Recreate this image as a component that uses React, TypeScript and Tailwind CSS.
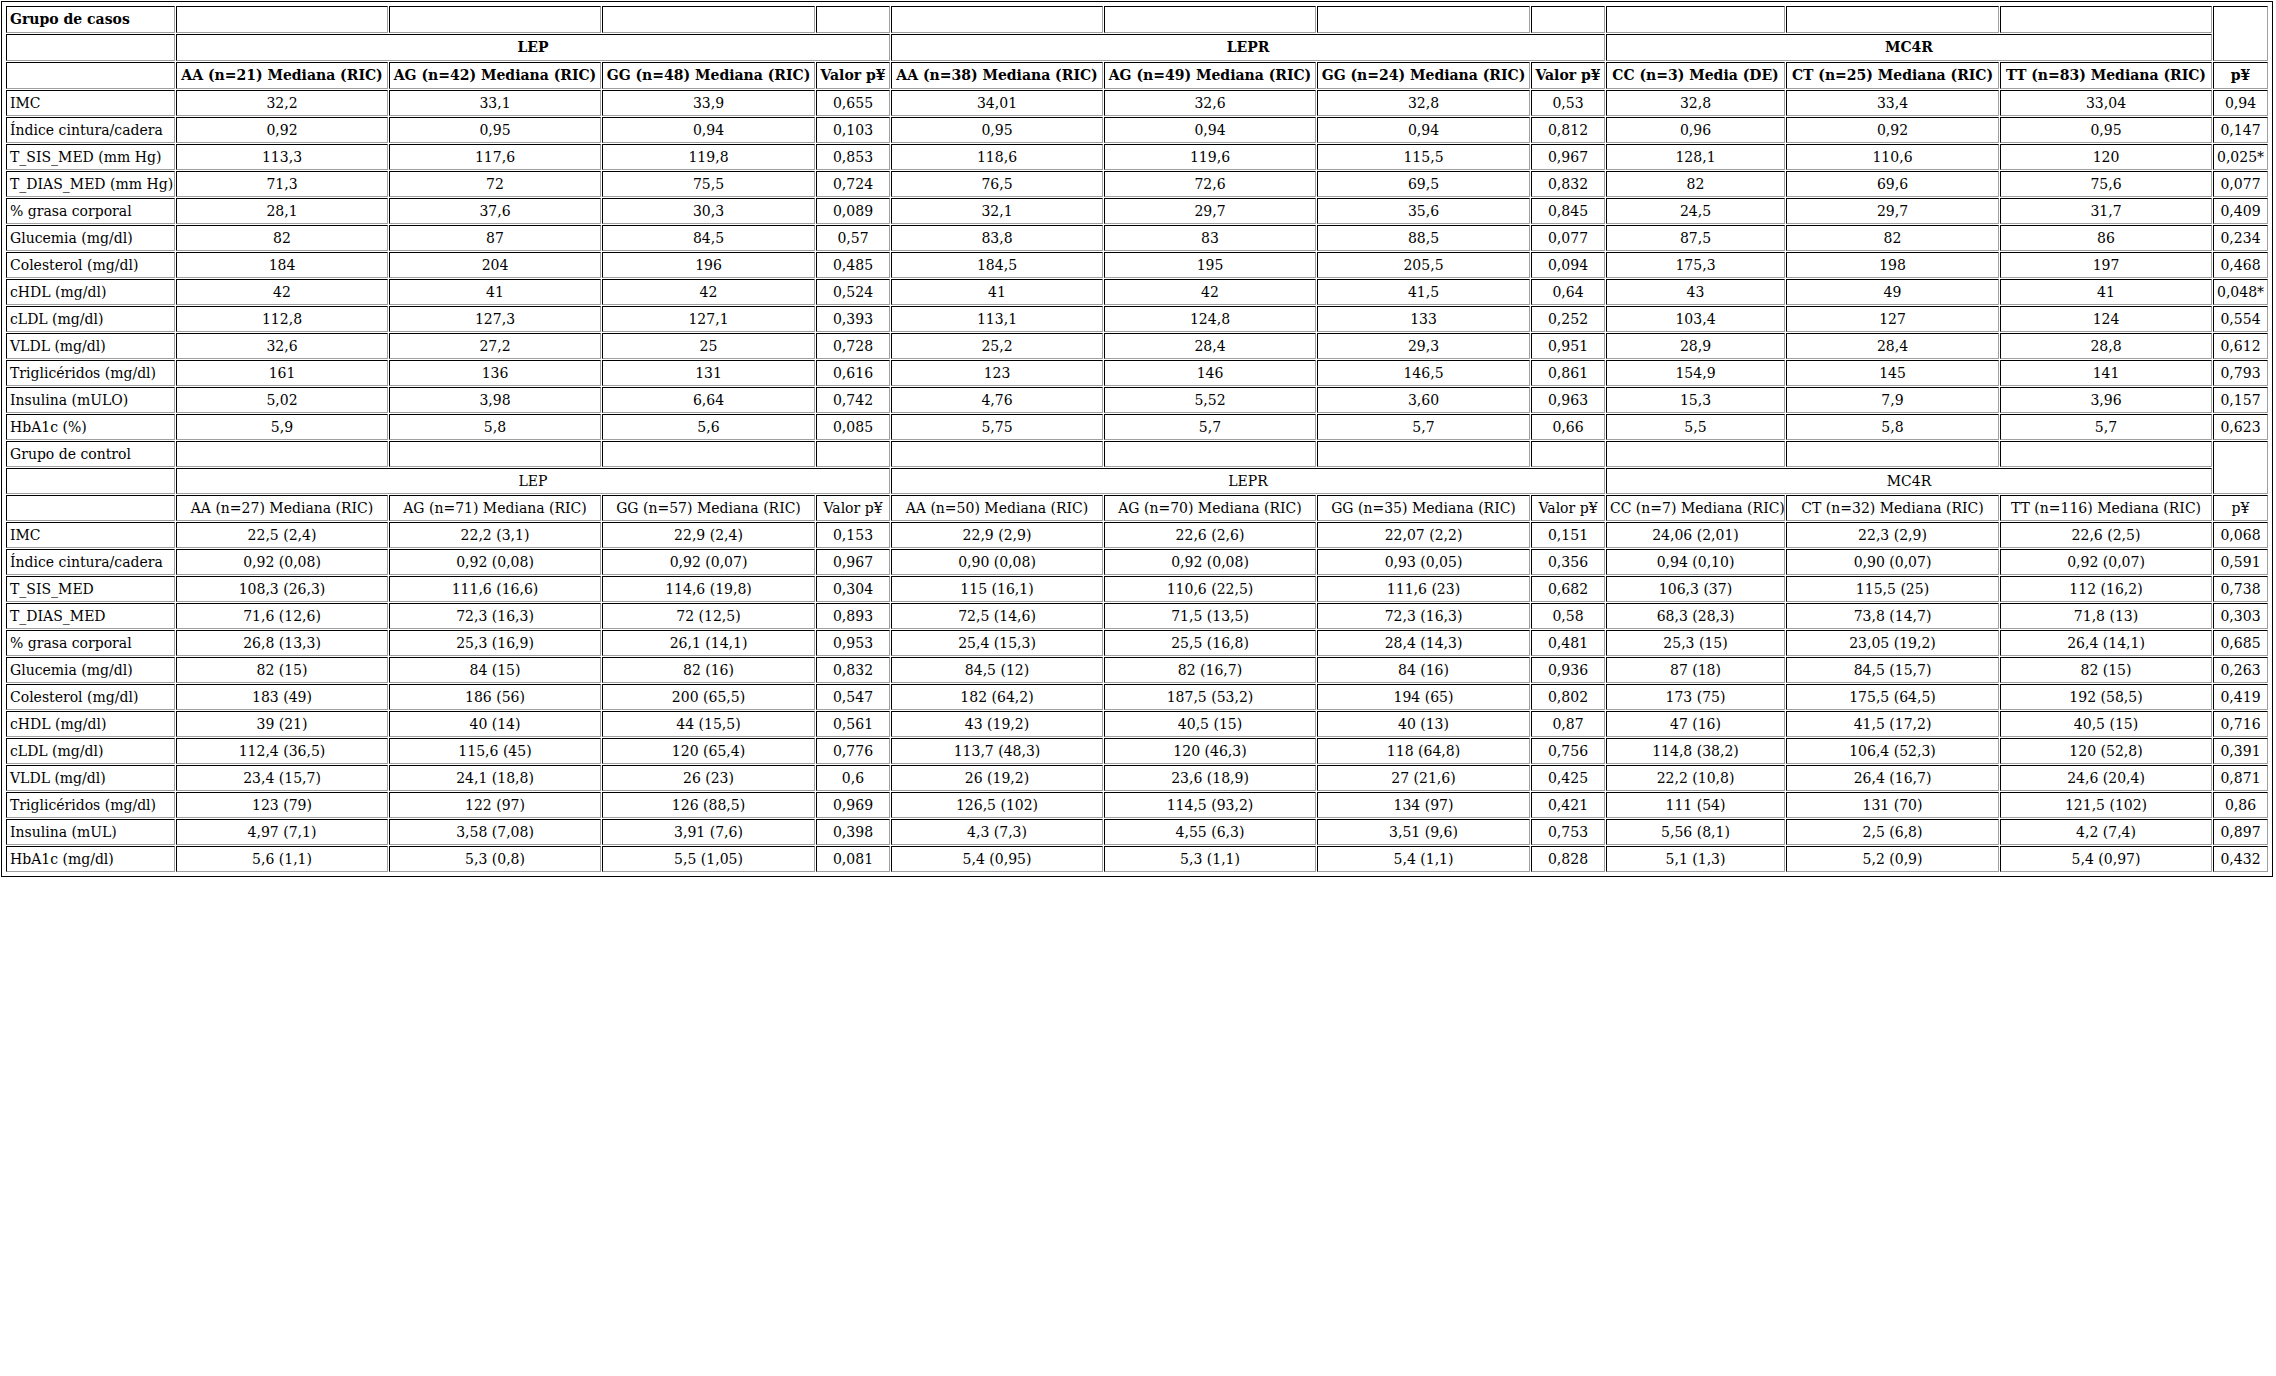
type Row = { label: string; values: string[] };

const casosRows: Row[] = [
  { label: "IMC", values: ["32,2", "33,1", "33,9", "0,655", "34,01", "32,6", "32,8", "0,53", "32,8", "33,4", "33,04", "0,94"] },
  { label: "Índice cintura/cadera", values: ["0,92", "0,95", "0,94", "0,103", "0,95", "0,94", "0,94", "0,812", "0,96", "0,92", "0,95", "0,147"] },
  { label: "T_SIS_MED (mm Hg)", values: ["113,3", "117,6", "119,8", "0,853", "118,6", "119,6", "115,5", "0,967", "128,1", "110,6", "120", "0,025*"] },
  { label: "T_DIAS_MED (mm Hg)", values: ["71,3", "72", "75,5", "0,724", "76,5", "72,6", "69,5", "0,832", "82", "69,6", "75,6", "0,077"] },
  { label: "% grasa corporal", values: ["28,1", "37,6", "30,3", "0,089", "32,1", "29,7", "35,6", "0,845", "24,5", "29,7", "31,7", "0,409"] },
  { label: "Glucemia (mg/dl)", values: ["82", "87", "84,5", "0,57", "83,8", "83", "88,5", "0,077", "87,5", "82", "86", "0,234"] },
  { label: "Colesterol (mg/dl)", values: ["184", "204", "196", "0,485", "184,5", "195", "205,5", "0,094", "175,3", "198", "197", "0,468"] },
  { label: "cHDL (mg/dl)", values: ["42", "41", "42", "0,524", "41", "42", "41,5", "0,64", "43", "49", "41", "0,048*"] },
  { label: "cLDL (mg/dl)", values: ["112,8", "127,3", "127,1", "0,393", "113,1", "124,8", "133", "0,252", "103,4", "127", "124", "0,554"] },
  { label: "VLDL (mg/dl)", values: ["32,6", "27,2", "25", "0,728", "25,2", "28,4", "29,3", "0,951", "28,9", "28,4", "28,8", "0,612"] },
  { label: "Triglicéridos (mg/dl)", values: ["161", "136", "131", "0,616", "123", "146", "146,5", "0,861", "154,9", "145", "141", "0,793"] },
  { label: "Insulina (mULO)", values: ["5,02", "3,98", "6,64", "0,742", "4,76", "5,52", "3,60", "0,963", "15,3", "7,9", "3,96", "0,157"] },
  { label: "HbA1c (%)", values: ["5,9", "5,8", "5,6", "0,085", "5,75", "5,7", "5,7", "0,66", "5,5", "5,8", "5,7", "0,623"] },
];

const controlRows: Row[] = [
  { label: "IMC", values: ["22,5 (2,4)", "22,2 (3,1)", "22,9 (2,4)", "0,153", "22,9 (2,9)", "22,6 (2,6)", "22,07 (2,2)", "0,151", "24,06 (2,01)", "22,3 (2,9)", "22,6 (2,5)", "0,068"] },
  { label: "Índice cintura/cadera", values: ["0,92 (0,08)", "0,92 (0,08)", "0,92 (0,07)", "0,967", "0,90 (0,08)", "0,92 (0,08)", "0,93 (0,05)", "0,356", "0,94 (0,10)", "0,90 (0,07)", "0,92 (0,07)", "0,591"] },
  { label: "T_SIS_MED", values: ["108,3 (26,3)", "111,6 (16,6)", "114,6 (19,8)", "0,304", "115 (16,1)", "110,6 (22,5)", "111,6 (23)", "0,682", "106,3 (37)", "115,5 (25)", "112 (16,2)", "0,738"] },
  { label: "T_DIAS_MED", values: ["71,6 (12,6)", "72,3 (16,3)", "72 (12,5)", "0,893", "72,5 (14,6)", "71,5 (13,5)", "72,3 (16,3)", "0,58", "68,3 (28,3)", "73,8 (14,7)", "71,8 (13)", "0,303"] },
  { label: "% grasa corporal", values: ["26,8 (13,3)", "25,3 (16,9)", "26,1 (14,1)", "0,953", "25,4 (15,3)", "25,5 (16,8)", "28,4 (14,3)", "0,481", "25,3 (15)", "23,05 (19,2)", "26,4 (14,1)", "0,685"] },
  { label: "Glucemia (mg/dl)", values: ["82 (15)", "84 (15)", "82 (16)", "0,832", "84,5 (12)", "82 (16,7)", "84 (16)", "0,936", "87 (18)", "84,5 (15,7)", "82 (15)", "0,263"] },
  { label: "Colesterol (mg/dl)", values: ["183 (49)", "186 (56)", "200 (65,5)", "0,547", "182 (64,2)", "187,5 (53,2)", "194 (65)", "0,802", "173 (75)", "175,5 (64,5)", "192 (58,5)", "0,419"] },
  { label: "cHDL (mg/dl)", values: ["39 (21)", "40 (14)", "44 (15,5)", "0,561", "43 (19,2)", "40,5 (15)", "40 (13)", "0,87", "47 (16)", "41,5 (17,2)", "40,5 (15)", "0,716"] },
  { label: "cLDL (mg/dl)", values: ["112,4 (36,5)", "115,6 (45)", "120 (65,4)", "0,776", "113,7 (48,3)", "120 (46,3)", "118 (64,8)", "0,756", "114,8 (38,2)", "106,4 (52,3)", "120 (52,8)", "0,391"] },
  { label: "VLDL (mg/dl)", values: ["23,4 (15,7)", "24,1 (18,8)", "26 (23)", "0,6", "26 (19,2)", "23,6 (18,9)", "27 (21,6)", "0,425", "22,2 (10,8)", "26,4 (16,7)", "24,6 (20,4)", "0,871"] },
  { label: "Triglicéridos (mg/dl)", values: ["123 (79)", "122 (97)", "126 (88,5)", "0,969", "126,5 (102)", "114,5 (93,2)", "134 (97)", "0,421", "111 (54)", "131 (70)", "121,5 (102)", "0,86"] },
  { label: "Insulina (mUL)", values: ["4,97 (7,1)", "3,58 (7,08)", "3,91 (7,6)", "0,398", "4,3 (7,3)", "4,55 (6,3)", "3,51 (9,6)", "0,753", "5,56 (8,1)", "2,5 (6,8)", "4,2 (7,4)", "0,897"] },
  { label: "HbA1c (mg/dl)", values: ["5,6 (1,1)", "5,3 (0,8)", "5,5 (1,05)", "0,081", "5,4 (0,95)", "5,3 (1,1)", "5,4 (1,1)", "0,828", "5,1 (1,3)", "5,2 (0,9)", "5,4 (0,97)", "0,432"] },
];

const casosHeads = [
  "AA (n=21) Mediana (RIC)", "AG (n=42) Mediana (RIC)", "GG (n=48) Mediana (RIC)", "Valor p¥",
  "AA (n=38) Mediana (RIC)", "AG (n=49) Mediana (RIC)", "GG (n=24) Mediana (RIC)", "Valor p¥",
  "CC (n=3) Media (DE)", "CT (n=25) Mediana (RIC)", "TT (n=83) Mediana (RIC)", "p¥",
];

const controlHeads = [
  "AA (n=27) Mediana (RIC)", "AG (n=71) Mediana (RIC)", "GG (n=57) Mediana (RIC)", "Valor p¥",
  "AA (n=50) Mediana (RIC)", "AG (n=70) Mediana (RIC)", "GG (n=35) Mediana (RIC)", "Valor p¥",
  "CC (n=7) Mediana (RIC)", "CT (n=32) Mediana (RIC)", "TT (n=116) Mediana (RIC)", "p¥",
];

// celda con borde "inset" como el de una tabla border=1
const cell =
  "whitespace-nowrap border border-t-black border-l-black border-r-[#a0a0a0] border-b-[#a0a0a0] px-[3px] py-0 align-middle";

function Section({
  title,
  heads,
  rows,
  bold,
}: {
  title: string;
  heads: string[];
  rows: Row[];
  bold: boolean;
}) {
  const weight = bold ? "font-bold" : "font-normal";
  // las cabeceras en negrita quedan un pixel más altas
  const headH = bold ? "h-[27px]" : "h-[26px]";
  return (
    <>
      <tr className={headH}>
        <td className={`${cell} ${headH} text-left ${weight}`}>{title}</td>
        {Array.from({ length: 11 }).map((_, i) => (
          <td key={i} className={`${cell} ${headH}`} />
        ))}
        <td rowSpan={2} className={cell} />
      </tr>
      <tr className={headH}>
        <td className={`${cell} ${headH}`} />
        <td colSpan={4} className={`${cell} ${headH} text-center ${weight}`}>LEP</td>
        <td colSpan={4} className={`${cell} ${headH} text-center ${weight}`}>LEPR</td>
        <td colSpan={3} className={`${cell} ${headH} text-center ${weight}`}>MC4R</td>
      </tr>
      <tr className={headH}>
        <td className={`${cell} ${headH}`} />
        {heads.map((h, i) => (
          <td key={i} className={`${cell} ${headH} text-center ${weight}`}>
            {h}
          </td>
        ))}
      </tr>
      {rows.map((r) => (
        <tr key={r.label} className="h-[26px]">
          <td className={`${cell} h-[26px] text-left`}>{r.label}</td>
          {r.values.map((v, i) => (
            <td key={i} className={`${cell} h-[26px] text-center`}>
              {v}
            </td>
          ))}
        </tr>
      ))}
    </>
  );
}

export default function App() {
  return (
    <div className="min-h-[1376px] w-full bg-white">
      <div className="ml-px mt-px inline-block border border-black p-[3px]">
        <table className="w-[2264px] table-fixed border-separate border-spacing-[1px] font-['DejaVu_Serif',serif] text-[14px] leading-normal text-black">
          <colgroup>
            <col className="w-[169px]" />
            <col className="w-[212px]" />
            <col className="w-[212px]" />
            <col className="w-[213px]" />
            <col className="w-[74px]" />
            <col className="w-[212px]" />
            <col className="w-[212px]" />
            <col className="w-[213px]" />
            <col className="w-[74px]" />
            <col className="w-[179px]" />
            <col className="w-[213px]" />
            <col className="w-[212px]" />
            <col className="w-[55px]" />
          </colgroup>
          <tbody>
            <Section title="Grupo de casos" heads={casosHeads} rows={casosRows} bold />
            <Section title="Grupo de control" heads={controlHeads} rows={controlRows} bold={false} />
          </tbody>
        </table>
      </div>
    </div>
  );
}
